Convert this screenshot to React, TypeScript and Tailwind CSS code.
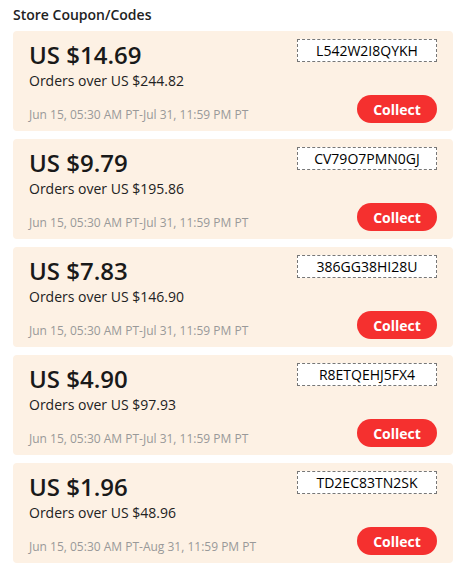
import React from 'react';

type Coupon = {
  amount: string;
  minOrder: string;
  code: string;
  period: string;
};

const coupons: Coupon[] = [
  { amount: 'US $14.69', minOrder: 'Orders over US $244.82', code: 'L542W2I8QYKH', period: 'Jun 15, 05:30 AM PT-Jul 31, 11:59 PM PT' },
  { amount: 'US $9.79', minOrder: 'Orders over US $195.86', code: 'CV79O7PMN0GJ', period: 'Jun 15, 05:30 AM PT-Jul 31, 11:59 PM PT' },
  { amount: 'US $7.83', minOrder: 'Orders over US $146.90', code: '386GG38HI28U', period: 'Jun 15, 05:30 AM PT-Jul 31, 11:59 PM PT' },
  { amount: 'US $4.90', minOrder: 'Orders over US $97.93', code: 'R8ETQEHJ5FX4', period: 'Jun 15, 05:30 AM PT-Jul 31, 11:59 PM PT' },
  { amount: 'US $1.96', minOrder: 'Orders over US $48.96', code: 'TD2EC83TN2SK', period: 'Jun 15, 05:30 AM PT-Aug 31, 11:59 PM PT' },
];

function CouponCard({ coupon }: { coupon: Coupon }) {
  return (
    <div className="flex h-[100px] justify-between rounded bg-[#fdf1e4] px-4 py-2">
      <div className="flex flex-col">
        <span className="text-[24px] leading-8 font-semibold text-[#191919]">{coupon.amount}</span>
        <span className="text-[14px] leading-5 text-[#222]">{coupon.minOrder}</span>
        <span className="mt-auto text-[12px] leading-4 text-[#999]">{coupon.period}</span>
      </div>
      <div className="flex flex-col items-end justify-between">
        <div className="flex h-[23px] w-[140px] items-center justify-center border border-dashed border-[#777] bg-white text-[14px] text-black">
          {coupon.code}
        </div>
        <button className="h-[28px] w-[80px] rounded-full bg-[#f5302f] text-[14px] font-bold text-white">
          Collect
        </button>
      </div>
    </div>
  );
}

export default function App() {
  return (
    <div className="min-h-[573px] bg-white pt-[5px] pl-[13px] pr-[14px] font-['Open_Sans',sans-serif]">
      <h2 className="mb-[6px] text-[14px] leading-5 font-semibold text-[#222]">Store Coupon/Codes</h2>
      <div className="flex flex-col gap-2">
        {coupons.map(c => (
          <CouponCard key={c.code} coupon={c} />
        ))}
      </div>
    </div>
  );
}
